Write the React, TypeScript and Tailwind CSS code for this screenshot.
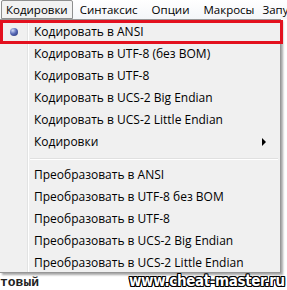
import React from 'react';

const topItems = [
  'Кодировать в ANSI',
  'Кодировать в UTF-8 (без BOM)',
  'Кодировать в UTF-8',
  'Кодировать в UCS-2 Big Endian',
  'Кодировать в UCS-2 Little Endian',
];

const convertItems = [
  'Преобразовать в ANSI',
  'Преобразовать в UTF-8 без BOM',
  'Преобразовать в UTF-8',
  'Преобразовать в UCS-2 Big Endian',
  'Преобразовать в UCS-2 Little Endian',
];

const MenuItem: React.FC<{ label: string; checked?: boolean; submenu?: boolean }> = ({ label, checked, submenu }) => (
  <div className="h-[22px] flex items-center relative">
    <div className="w-[28px] h-full flex items-center justify-center">
      {checked && (
        <span className="w-[8px] h-[8px] rounded-full bg-[radial-gradient(circle_at_35%_30%,#d0dcf8_0%,#5a6cb8_45%,#1c2a6e_100%)]" />
      )}
    </div>
    <span className="pl-[6px] whitespace-nowrap">{label}</span>
    {submenu && (
      <span className="absolute right-[14px] top-[7px] w-0 h-0 border-y-[4px] border-y-transparent border-l-[4px] border-l-black" />
    )}
  </div>
);

const App: React.FC = () => {
  return (
    <div className="w-[287px] h-[290px] bg-white relative overflow-hidden font-['Open_Sans',sans-serif] text-[12px] text-black leading-none">
      {/* menu bar */}
      <div className="h-[19px] flex items-center bg-[linear-gradient(#ffffff,#f4f6f9)] whitespace-nowrap text-[11.5px]">
        <div className="shrink-0 ml-[1px] h-[19px] px-[4px] flex items-center border border-[#8e8f8f] rounded-t-[2px] bg-[#f2f2f2]">Кодировки</div>
        <div className="shrink-0 ml-[7px]">Синтаксис</div>
        <div className="shrink-0 ml-[14px]">Опции</div>
        <div className="shrink-0 ml-[14px]">Макросы</div>
        <div className="shrink-0 ml-[8px]">Запуск</div>
      </div>

      {/* editor */}
      <div className="absolute left-0 top-[276px] font-['Liberation_Mono',monospace] text-[13px] font-bold text-[#222]">товый</div>

      {/* dropdown */}
      <div className="absolute left-0 top-[19px] w-[281px] h-[254px] bg-[#f0f0f0] border border-[#979797] border-l-0 shadow-[2px_2px_2px_rgba(0,0,0,0.35)] pt-[1px]">
        <div className="absolute left-[27px] top-0 bottom-0 w-[1px] bg-[#e2e3e3]" />
        <div className="absolute left-[28px] top-0 bottom-0 w-[1px] bg-white" />
        <div className="relative">
          {topItems.map((t, i) => (
            <MenuItem key={t} label={t} checked={i === 0} />
          ))}
          <MenuItem label="Кодировки" submenu />
          <div className="h-[11px] flex items-center pl-[30px] pr-[2px]">
            <div className="w-full">
              <div className="h-[1px] bg-[#e0e0e0]" />
              <div className="h-[1px] bg-white" />
            </div>
          </div>
          {convertItems.map((t) => (
            <MenuItem key={t} label={t} />
          ))}
        </div>
      </div>

      {/* red highlight */}
      <div className="absolute left-0 top-[20px] w-[283px] h-[24px] border-[3px] border-[#e3101e]" />

      {/* watermark */}
      <div className="absolute left-[129px] top-[274px] whitespace-nowrap origin-left scale-x-[0.9] font-['DejaVu_Sans',sans-serif] font-bold text-[15px] text-white tracking-[-0.4px] [text-shadow:1px_0_0_#000,-1px_0_0_#000,0_1px_0_#000,0_-1px_0_#000,1px_1px_0_#000,-1px_-1px_0_#000,1px_-1px_0_#000,-1px_1px_0_#000]">
        www.cheat-master.ru
      </div>
    </div>
  );
};

export default App;
